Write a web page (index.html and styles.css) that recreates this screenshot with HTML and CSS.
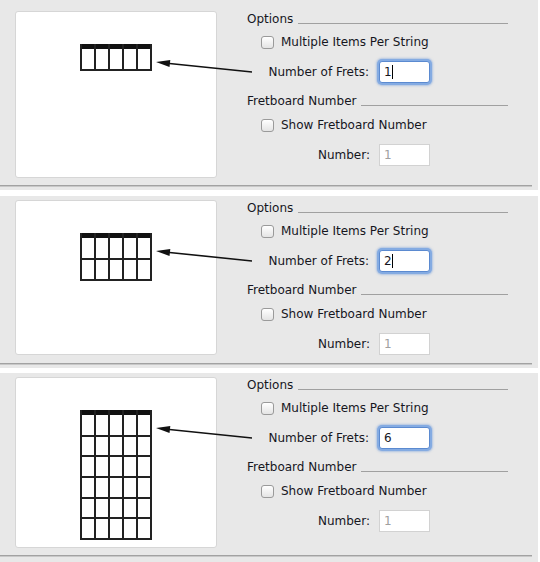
FILE: index.html
```html
<!DOCTYPE HTML>
<html>
<head>
    <title>Fretboard Options</title>
    <link rel="stylesheet" href="styles.css">
</head>
<body>
    <!-- one fret -->
    <div class="panel panel-one">
        <div class="panel-body">
            <div class="preview">
                <svg class="fretboard" width="72" height="28" viewBox="0 0 72 28">
                    <rect x="0" y="0" width="72" height="5" fill="#111"/>
                    <g stroke="#222" stroke-width="2">
                        <line x1="1" y1="0" x2="1" y2="27"/>
                        <line x1="15" y1="0" x2="15" y2="27"/>
                        <line x1="29" y1="0" x2="29" y2="27"/>
                        <line x1="43" y1="0" x2="43" y2="27"/>
                        <line x1="57" y1="0" x2="57" y2="27"/>
                        <line x1="71" y1="0" x2="71" y2="27"/>
                        <line x1="0" y1="26" x2="72" y2="26"/>
                    </g>
                </svg>
            </div>
            <svg class="arrow" width="110" height="30" viewBox="0 0 110 30">
                <line x1="18" y1="12.2" x2="103" y2="21" stroke="#111" stroke-width="1.6"/>
                <polygon points="7,11 20.5,16 21.3,8.9" fill="#111"/>
            </svg>
            <div class="options">
                <div class="heading"><span>Options</span><span class="heading-line"></span></div>
                <div class="check-row first-check"><span class="checkbox"></span>Multiple Items Per String</div>
                <div class="field-row frets-row"><span class="field-label">Number of Frets:</span><span class="field focused">1<span class="caret"></span></span></div>
                <div class="heading second-heading"><span>Fretboard Number</span><span class="heading-line"></span></div>
                <div class="check-row show-row"><span class="checkbox"></span>Show Fretboard Number</div>
                <div class="field-row number-row"><span class="field-label">Number:</span><span class="field disabled">1</span></div>
            </div>
        </div>
        <div class="rule"></div>
    </div>

    <!-- two frets -->
    <div class="panel panel-two">
        <div class="panel-body">
            <div class="preview">
                <svg class="fretboard" width="72" height="49" viewBox="0 0 72 49">
                    <rect x="0" y="0" width="72" height="5" fill="#111"/>
                    <g stroke="#222" stroke-width="2">
                        <line x1="1" y1="0" x2="1" y2="48"/>
                        <line x1="15" y1="0" x2="15" y2="48"/>
                        <line x1="29" y1="0" x2="29" y2="48"/>
                        <line x1="43" y1="0" x2="43" y2="48"/>
                        <line x1="57" y1="0" x2="57" y2="48"/>
                        <line x1="71" y1="0" x2="71" y2="48"/>
                        <line x1="0" y1="26" x2="72" y2="26"/>
                        <line x1="0" y1="47" x2="72" y2="47"/>
                    </g>
                </svg>
            </div>
            <svg class="arrow" width="110" height="30" viewBox="0 0 110 30">
                <line x1="18" y1="12.2" x2="103" y2="21" stroke="#111" stroke-width="1.6"/>
                <polygon points="7,11 20.5,16 21.3,8.9" fill="#111"/>
            </svg>
            <div class="options">
                <div class="heading"><span>Options</span><span class="heading-line"></span></div>
                <div class="check-row first-check"><span class="checkbox"></span>Multiple Items Per String</div>
                <div class="field-row frets-row"><span class="field-label">Number of Frets:</span><span class="field focused">2<span class="caret"></span></span></div>
                <div class="heading second-heading"><span>Fretboard Number</span><span class="heading-line"></span></div>
                <div class="check-row show-row"><span class="checkbox"></span>Show Fretboard Number</div>
                <div class="field-row number-row"><span class="field-label">Number:</span><span class="field disabled">1</span></div>
            </div>
        </div>
        <div class="rule"></div>
    </div>

    <!-- six frets -->
    <div class="panel panel-three">
        <div class="panel-body">
            <div class="preview">
                <svg class="fretboard" width="72" height="131" viewBox="0 0 72 131">
                    <rect x="0" y="0" width="72" height="5" fill="#111"/>
                    <g stroke="#222" stroke-width="2">
                        <line x1="1" y1="0" x2="1" y2="130"/>
                        <line x1="15" y1="0" x2="15" y2="130"/>
                        <line x1="29" y1="0" x2="29" y2="130"/>
                        <line x1="43" y1="0" x2="43" y2="130"/>
                        <line x1="57" y1="0" x2="57" y2="130"/>
                        <line x1="71" y1="0" x2="71" y2="130"/>
                        <line x1="0" y1="26" x2="72" y2="26"/>
                        <line x1="0" y1="46" x2="72" y2="46"/>
                        <line x1="0" y1="67" x2="72" y2="67"/>
                        <line x1="0" y1="88" x2="72" y2="88"/>
                        <line x1="0" y1="108" x2="72" y2="108"/>
                        <line x1="0" y1="129" x2="72" y2="129"/>
                    </g>
                </svg>
            </div>
            <svg class="arrow" width="110" height="30" viewBox="0 0 110 30">
                <line x1="18" y1="12.2" x2="103" y2="21" stroke="#111" stroke-width="1.6"/>
                <polygon points="7,11 20.5,16 21.3,8.9" fill="#111"/>
            </svg>
            <div class="options">
                <div class="heading"><span>Options</span><span class="heading-line"></span></div>
                <div class="check-row first-check"><span class="checkbox"></span>Multiple Items Per String</div>
                <div class="field-row frets-row"><span class="field-label">Number of Frets:</span><span class="field focused">6</span></div>
                <div class="heading second-heading"><span>Fretboard Number</span><span class="heading-line"></span></div>
                <div class="check-row show-row"><span class="checkbox"></span>Show Fretboard Number</div>
                <div class="field-row number-row"><span class="field-label">Number:</span><span class="field disabled">1</span></div>
            </div>
        </div>
        <div class="rule"></div>
    </div>
</body>
</html>
```

FILE: styles.css
```css
body {
    margin: 0;
    background-color: #ffffff;
    font-family: "DejaVu Sans", "Liberation Sans", sans-serif;
    font-size: 12px;
    color: #16161e;
}

.panel {
    width: 538px;
    background-color: #e8e8e8;
}

.panel-one {
    padding-top: 11px;
    padding-bottom: 3px;
    margin-bottom: 6px;
}

.panel-two {
    padding-top: 4px;
    padding-bottom: 3px;
    margin-bottom: 5px;
}

.panel-three {
    padding-top: 4px;
    padding-bottom: 6px;
}

.panel-body {
    position: relative;
    display: flex;
    align-items: flex-start;
}

.panel-one .panel-body { height: 167px; }
.panel-two .panel-body { height: 155px; }
.panel-three .panel-body { height: 171px; }

.panel-one .rule { margin-top: 7px; }
.panel-two .rule { margin-top: 8px; }
.panel-three .rule { margin-top: 7px; }

/* white preview box with the fretboard */
.preview {
    box-sizing: border-box;
    width: 202px;
    height: 100%;
    margin-left: 15px;
    padding: 32px 0 0 64px;
    background-color: #ffffff;
    border: 1px solid #d6d6d6;
    border-radius: 3px;
}

.fretboard {
    display: block;
}

/* arrow lies over the preview and the options */
.arrow {
    position: absolute;
    left: 149px;
    top: 40px;
}

.options {
    width: 261px;
    margin-left: 30px;
}

.heading {
    display: flex;
    align-items: center;
    height: 16px;
}

.second-heading {
    height: 28px;
}

.heading-line {
    flex: 1;
    height: 1px;
    margin-left: 5px;
    margin-top: 8px;
    background-color: #a0a0a0;
}

.check-row {
    display: flex;
    align-items: center;
    height: 30px;
}

.show-row {
    height: 20px;
}

.checkbox {
    box-sizing: border-box;
    width: 13px;
    height: 13px;
    margin-left: 14px;
    margin-right: 7px;
    border: 1px solid #9a9a9a;
    border-radius: 3px;
    background: linear-gradient(#ffffff, #e4e4e4);
}

.field-row {
    display: flex;
    align-items: center;
    height: 30px;
}

.number-row {
    height: 22px;
    margin-top: 9px;
}

.field-label {
    width: 123px;
    text-align: right;
}

.frets-row .field-label {
    width: 122px;
}

.field {
    box-sizing: border-box;
    display: flex;
    align-items: center;
    width: 51px;
    height: 22px;
    margin-left: 9px;
    padding-left: 4px;
    background-color: #ffffff;
    border: 1px solid #b8b8b8;
}

.focused {
    margin-left: 10px;
    border-color: #5b8ad0;
    border-radius: 3px;
    box-shadow: 0 0 0 2px #84abe2, 0 0 2px 3px rgba(120, 160, 220, 0.5);
}

.disabled {
    color: #a0a0a0;
    border-color: #d2d2d2;
}

.caret {
    display: inline-block;
    width: 1px;
    height: 14px;
    background-color: #000000;
}

.rule {
    height: 0;
    margin-right: 6px;
    border-top: 1px solid #a2a2a2;
    border-bottom: 1px solid #c8c8c8;
}
```
